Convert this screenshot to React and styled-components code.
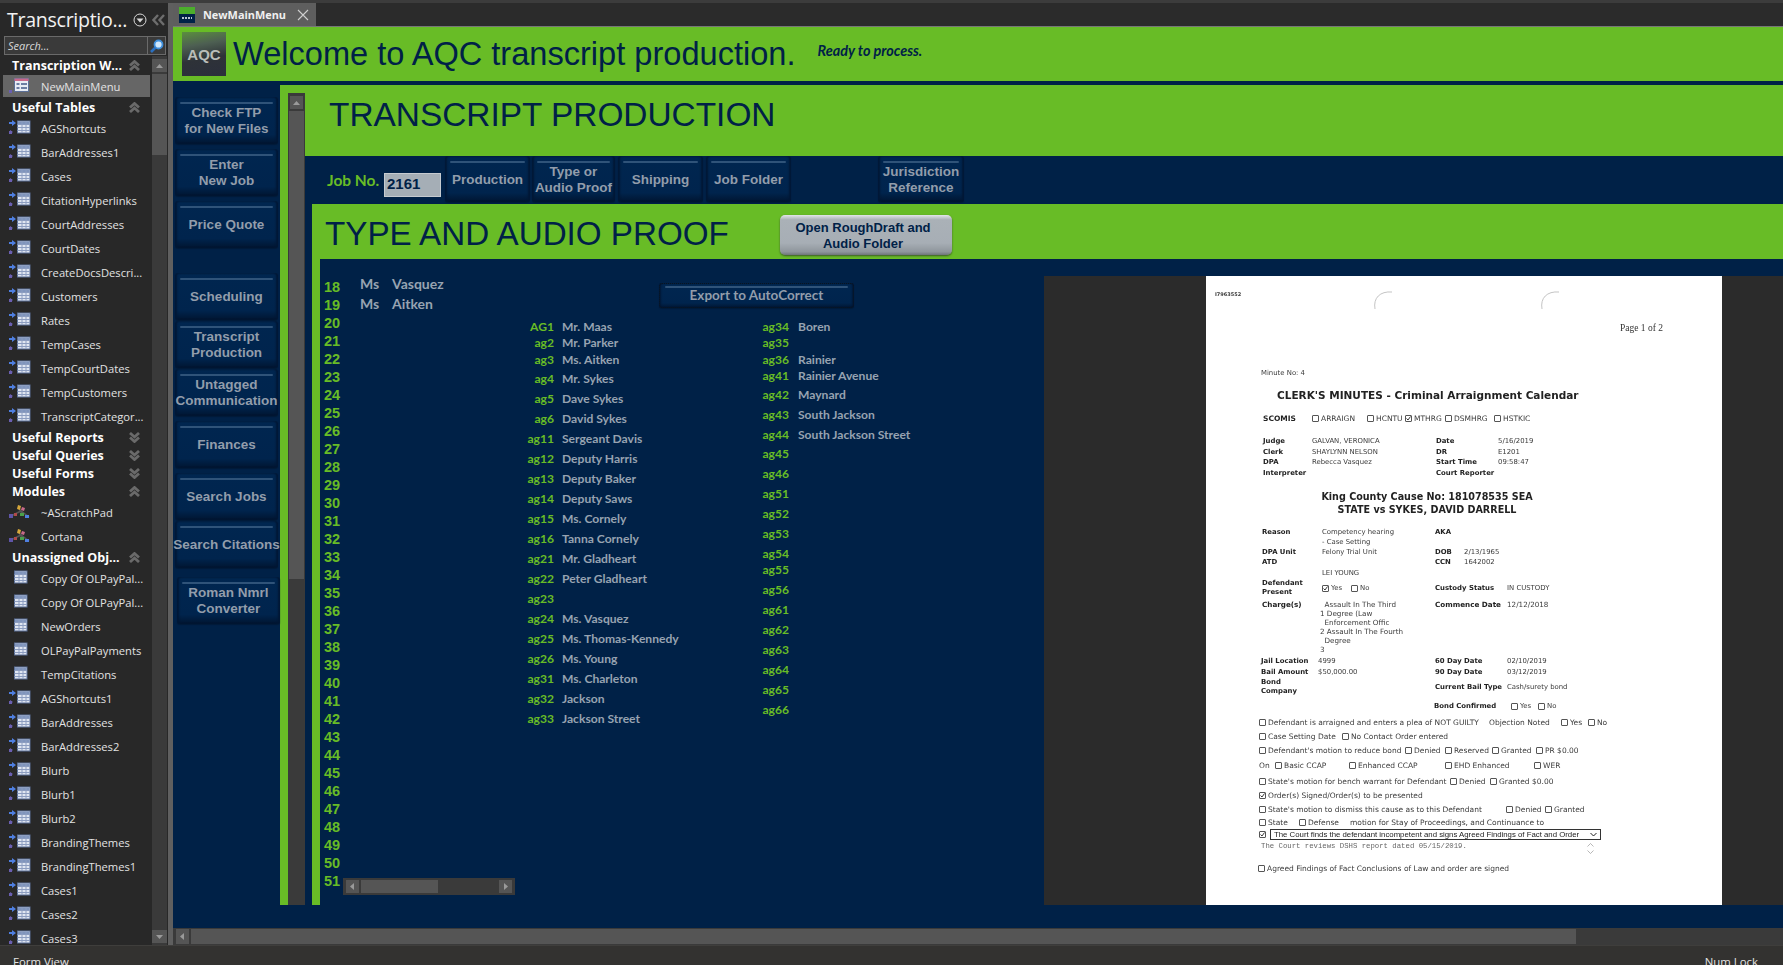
import React from 'react';
import styled, { createGlobalStyle } from 'styled-components';

const green = '#68bc26';
const navy = '#002147';

const GlobalStyle = createGlobalStyle`
  html, body {
    margin: 0;
    padding: 0;
    overflow: hidden;
    background: #333230;
  }
`;

// --- shell ---
const Shell = styled.div`
  width: 1783px;
  height: 965px;
  display: flex;
  flex-direction: column;
  overflow: hidden;
  font-family: 'Open Sans', 'Liberation Sans', sans-serif;
`;

const TopStrip = styled.div`
  height: 3px;
  background: #3c3c3c;
  flex: none;
`;

const Middle = styled.div`
  flex: 1;
  display: flex;
  min-height: 0;
`;

const StatusBar = styled.div`
  height: 20px;
  flex: none;
  box-sizing: border-box;
  display: flex;
  justify-content: space-between;
  padding: 7px 25px 0 13px;
  background: #333230;
  border-top: 1px solid #3f3e3c;
  color: #e4e4e4;
  font-size: 11.4px;
  line-height: 17px;
`;

// --- navigation pane ---
const Nav = styled.div`
  width: 168px;
  flex: none;
  display: flex;
  flex-direction: column;
  background: #282828;
`;

const NavTitleRow = styled.div`
  height: 33px;
  display: flex;
  align-items: center;
  padding-left: 7px;
  color: #f2f2f2;
  font-size: 19.6px;
  line-height: 33px;
  font-weight: 400;
`;

const NavTitleText = styled.span`
  width: 126px;
  white-space: nowrap;
  letter-spacing: -0.3px;
`;

const SearchBox = styled.div`
  height: 19px;
  margin: 0 2px 0 4px;
  display: flex;
  border: 1px solid #6a6a6a;
  background: #3a3a3a;
  box-sizing: border-box;
`;

const SearchText = styled.div`
  flex: 1;
  color: #d8d8d8;
  font-size: 11px;
  font-style: italic;
  line-height: 17px;
  padding-left: 3px;
  border-right: 1px solid #6a6a6a;
`;

const SearchIconBox = styled.div`
  width: 17px;
  display: flex;
  align-items: center;
  justify-content: center;
`;

const NavBody = styled.div`
  flex: 1;
  display: flex;
  min-height: 0;
  margin-top: 1px;
`;

const NavList = styled.div`
  width: 152px;
  flex: none;
  overflow: hidden;
`;

const NavHeader = styled.div`
  height: 18px;
  display: flex;
  align-items: center;
  justify-content: space-between;
  padding: 0 12px 0 12px;
  color: #fff;
  font-size: 12.5px;
  font-weight: 700;
  white-space: nowrap;
`;

const NavItem = styled.div`
  height: ${(p) => (p.$selected ? '22px' : '24px')};
  margin: ${(p) => (p.$selected ? '1px 2px 1px 3px' : '0')};
  padding-left: ${(p) => (p.$selected ? '6px' : '9px')};
  display: flex;
  align-items: center;
  background: ${(p) => (p.$selected ? '#666' : 'transparent')};
  color: #e2e2e2;
  font-size: 11.2px;
  white-space: nowrap;
`;

const NavIconSlot = styled.div`
  width: 32px;
  height: 16px;
  flex: none;
`;

const ScrollTrack = styled.div`
  width: 15px;
  flex: none;
  display: flex;
  flex-direction: column;
  background: #3a3a3a;
  gap: 2px;
  padding: 3px 0 2px;
  box-sizing: border-box;
`;

const HorizontalTrack = styled.div`
  height: 17px;
  flex: none;
  display: flex;
  gap: 2px;
  padding: 1px 0 1px 3px;
  box-sizing: border-box;
  background: #3a3a3a;
`;

const ScrollButton = styled.div`
  height: ${(p) => p.$size || 13}px;
  width: ${(p) => (p.$wide ? `${p.$wide}px` : 'auto')};
  flex: none;
  display: flex;
  align-items: center;
  justify-content: center;
  background: #555;
`;

const ScrollThumb = styled.div`
  background: #555;
  flex: none;
  height: ${(p) => p.$size}px;
  width: ${(p) => (p.$wide ? `${p.$wide}px` : 'auto')};
`;

const ScrollSpace = styled.div`
  flex: 1;
`;

const Divider = styled.div`
  width: 5px;
  flex: none;
  background: #5f5f5f;
`;

// --- main area ---
const Main = styled.div`
  flex: 1;
  min-width: 0;
  display: flex;
  flex-direction: column;
  background: ${navy};
`;

const TabStrip = styled.div`
  height: 23px;
  flex: none;
  display: flex;
  background: #2b2b2b;
`;

const Tab = styled.div`
  width: 143px;
  display: flex;
  align-items: center;
  padding-left: 6px;
  box-sizing: border-box;
  background: #5e5e5e;
  color: #f0f0f0;
  font-size: 10.9px;
  font-weight: 700;
`;

const TabLabel = styled.span`
  margin-left: 8px;
  flex: 1;
`;

const WelcomeBand = styled.div`
  height: 55px;
  flex: none;
  display: flex;
  align-items: center;
  padding-left: 9px;
  background: ${green};
  border-top: 1px solid #777;
  box-sizing: border-box;
`;

const Logo = styled.div`
  width: 44px;
  height: 44px;
  display: flex;
  align-items: center;
  justify-content: center;
  background: linear-gradient(170deg, #5b8f3e 0%, #4d5f52 30%, #2e3238 60%, #2b2f3c 100%);
  color: #b9bdb9;
  font-family: 'Liberation Sans', Arial, sans-serif;
  font-size: 15px;
  font-weight: 700;
`;

const WelcomeText = styled.div`
  margin-left: 7px;
  color: ${navy};
  font-family: 'Liberation Sans', Arial, sans-serif;
  font-size: 32.6px;
  white-space: nowrap;
`;

const ReadyText = styled.div`
  margin: 0 0 8px 22px;
  color: ${navy};
  font-family: Lato, 'Liberation Sans', sans-serif;
  font-size: 14.4px;
  font-weight: 700;
  font-style: italic;
  white-space: nowrap;
`;

const Body = styled.div`
  flex: 1;
  min-height: 0;
  display: flex;
`;

const ButtonColumn = styled.div`
  width: 107px;
  flex: none;
  display: flex;
  flex-direction: column;
  padding: 16px 0 0 2px;
  box-sizing: border-box;
`;

const NavyButton = styled.div`
  position: relative;
  width: ${(p) => p.$w || 103}px;
  height: ${(p) => p.$h || 47}px;
  margin-top: ${(p) => p.$top || 0}px;
  margin-left: ${(p) => p.$left || 0}px;
  flex: none;
  display: flex;
  align-items: center;
  justify-content: center;
  text-align: center;
  box-sizing: border-box;
  padding-top: 1px;
  border-radius: 3px;
  background: linear-gradient(#002650 0%, #00244d 80%, #001836 96%, #00142d 100%);
  box-shadow: inset 2px 0 2px #001836, inset -2px 0 2px #001836, 0 1px 1px #001a38;
  color: #929dab;
  font-family: 'Liberation Sans', Arial, sans-serif;
  font-size: 13.5px;
  line-height: 16px;
  font-weight: 700;
  white-space: nowrap;

  &::before {
    content: '';
    position: absolute;
    top: 5px;
    left: 5px;
    right: 5px;
    height: 2px;
    border-radius: 1px;
    background: #2f5379;
  }
`;

const FormFrame = styled.div`
  flex: 1;
  min-width: 0;
  display: flex;
  margin: 4px 0 23px;
  background: ${green};
`;

const FormScroll = styled.div`
  width: 17px;
  flex: none;
  margin: 8px 0 0 8px;
  display: flex;
  flex-direction: column;
  align-items: center;
  padding-top: 3px;
  gap: 2px;
  background: #3a3a3a;
`;

const FormBody = styled.div`
  flex: 1;
  min-width: 0;
  display: flex;
  flex-direction: column;
`;

const TitleBand = styled.div`
  height: 71px;
  flex: none;
  box-sizing: border-box;
  padding: 11px 0 0 24px;
  color: ${navy};
  font-family: 'Liberation Sans', Arial, sans-serif;
  font-size: 33.4px;
  line-height: 38px;
`;

const JobBar = styled.div`
  height: 48px;
  flex: none;
  box-sizing: border-box;
  display: flex;
  align-items: center;
  padding: 0 0 2px 22px;
  background: ${navy};
`;

const JobLabel = styled.div`
  width: 57px;
  margin-top: 2px;
  color: ${green};
  font-family: Lato, 'Liberation Sans', sans-serif;
  font-size: 15.5px;
  font-weight: 700;
  white-space: nowrap;
`;

const JobInput = styled.div`
  width: 57px;
  height: 24px;
  margin: 12px 4px 0 0;
  box-sizing: border-box;
  padding-left: 2px;
  background: #a5aeb6;
  border: 1px solid #c6cbd0;
  color: ${navy};
  font-family: 'Liberation Sans', Arial, sans-serif;
  font-size: 15px;
  font-weight: 700;
  line-height: 20px;
`;

const SubFrame = styled.div`
  flex: 1;
  min-height: 0;
  display: flex;
  flex-direction: column;
  padding-left: 7px;
  background: ${navy};
`;

const SubHead = styled.div`
  height: 55px;
  flex: none;
  box-sizing: border-box;
  display: flex;
  align-items: center;
  padding-left: 13px;
  background: ${green};
`;

const SubTitle = styled.div`
  width: 455px;
  margin-top: 4px;
  color: ${navy};
  font-family: 'Liberation Sans', Arial, sans-serif;
  font-size: 33.2px;
  white-space: nowrap;
`;

const SilverButton = styled.div`
  width: 172px;
  height: 40px;
  margin-top: 7px;
  box-sizing: border-box;
  padding: 5px 6px 0 0;
  border-radius: 5px;
  text-align: center;
  background: linear-gradient(#e3e6e8 0%, #aab1b7 12%, #a7aeb5 70%, #8f969c 92%, #6e7479 100%);
  box-shadow: 0 1px 2px #3d5a28;
  color: ${navy};
  font-family: 'Liberation Sans', Arial, sans-serif;
  font-size: 13px;
  line-height: 16px;
  font-weight: 700;
`;

const ContentRow = styled.div`
  position: relative;
  flex: 1;
  min-height: 0;
  display: flex;
  background: ${navy};
  border-left: 8px solid ${green};
`;

const NumberColumn = styled.div`
  width: 36px;
  flex: none;
  padding: 19px 0 0 4px;
  color: ${green};
  font-family: 'Liberation Sans', Arial, sans-serif;
  font-size: 14.5px;
  font-weight: 700;
  line-height: 18px;
`;

const PeopleColumn = styled.div`
  width: 160px;
  flex: none;
  padding-top: 14px;
`;

const PersonRow = styled.div`
  height: 20px;
  display: flex;
  align-items: center;
  color: #97a3b1;
  font-family: Lato, 'Liberation Sans', sans-serif;
  font-size: 14px;
  font-weight: 700;
`;

const PersonTitle = styled.span`
  width: 32px;
`;

const MiddleColumn = styled.div`
  width: 524px;
  flex: none;
  padding-top: 24px;
`;

const ExportButton = styled(NavyButton)`
  outline: 1px dotted #0a1420;
  outline-offset: -1px;
  font-size: 13.5px;
  font-family: Lato, 'Liberation Sans', sans-serif;
  padding-top: 0;
  padding-bottom: 2px;
  &::before {
    top: 3px;
    left: 6px;
    right: 6px;
  }
`;

const AliasColumns = styled.div`
  display: flex;
  margin-top: 10px;
`;

const AliasColumn = styled.div`
  width: 235px;
  flex: none;
`;

const AliasRow = styled.div`
  height: ${(p) => p.$h}px;
  display: flex;
  align-items: flex-start;
  font-family: Lato, 'Liberation Sans', sans-serif;
  font-size: 12.1px;
  font-weight: 700;
  line-height: 18px;
  white-space: nowrap;
`;

const AliasCode = styled.span`
  width: 34px;
  flex: none;
  text-align: right;
  color: ${green};
`;

const AliasName = styled.span`
  margin-left: ${(p) => p.$gap}px;
  color: #97a3b1;
`;

const MiniScroll = styled.div`
  position: absolute;
  left: 23px;
  top: 619px;
  width: 172px;
  height: 17px;
  box-sizing: border-box;
  padding: 2px 3px;
  display: flex;
  gap: 2px;
  background: #3a3a3a;
`;

const MiniThumb = styled.div`
  width: 77px;
  background: #555;
`;

// --- scanned page viewer ---
const Viewer = styled.div`
  flex: 1;
  margin-top: 17px;
  padding-left: 162px;
  background: #2b2b2b;
`;

const Paper = styled.div`
  width: 516px;
  height: 100%;
  box-sizing: border-box;
  padding-left: 55px;
  background: #fff;
  color: #3a3a3a;
  font-family: 'DejaVu Sans', Verdana, sans-serif;
  font-size: 6.9px;
  overflow: hidden;
  filter: blur(0.25px);
`;

const Row = styled.div`
  height: ${(p) => p.$h || 10}px;
  margin-top: ${(p) => p.$mt || 0}px;
  margin-left: ${(p) => p.$ml || 0}px;
  display: flex;
  align-items: center;
  white-space: nowrap;
  font-size: ${(p) => (p.$big ? '7.5px' : 'inherit')};
`;

const Slot = styled.div`
  width: ${(p) => p.$w}px;
  flex: none;
  font-weight: ${(p) => (p.$bold ? 700 : 400)};
  color: ${(p) => (p.$bold ? '#222' : 'inherit')};
  display: flex;
  align-items: center;
`;

const PageNo = styled.div`
  height: 16px;
  width: 402px;
  text-align: right;
  color: #333;
  font-family: 'Liberation Serif', 'Times New Roman', serif;
  font-size: 9.5px;
  line-height: 16px;
`;

const ScanId = styled.div`
  width: 159px;
  margin-left: -46px;
  font-size: 5px;
  font-weight: 700;
`;

const TopMarks = styled.div`
  height: 44px;
  display: flex;
  align-items: flex-start;
  padding-top: 14px;
  box-sizing: border-box;
  line-height: 8px;
`;

const HoleSlot = styled.div`
  width: ${(p) => p.$w}px;
  flex: none;
`;

const PaperHeading = styled.div`
  color: #222;
  font-weight: 700;
  font-size: ${(p) => p.$size}px;
`;

const CenteredLine = styled.div`
  height: ${(p) => p.$h}px;
  margin-top: ${(p) => p.$mt || 0}px;
  width: 332px;
  text-align: center;
  color: #222;
  font-size: 9.6px;
  font-weight: 700;
  line-height: ${(p) => p.$h}px;
  white-space: nowrap;
`;

const CheckBox = styled.span`
  width: 7px;
  height: 7px;
  margin-right: 2px;
  flex: none;
  box-sizing: border-box;
  border: 1px solid #555;
  border-radius: 1px;
  display: inline-flex;
  align-items: center;
  justify-content: center;
`;

const TwoLine = styled.div`
  font-weight: 700;
  color: #222;
  line-height: 9.5px;
`;

const ChargeText = styled.div`
  line-height: 9px;
  font-size: 7.2px;
`;

const SelectBox = styled.div`
  width: 331px;
  height: 11px;
  margin-left: 2px;
  box-sizing: border-box;
  padding: 0 3px;
  display: flex;
  align-items: center;
  justify-content: space-between;
  border: 1px solid #333;
  color: #222;
  font-family: 'Liberation Sans', Arial, sans-serif;
  font-size: 7.8px;
`;

const NotesBlock = styled.div`
  height: 20px;
  margin-top: 1px;
  width: 336px;
  display: flex;
  justify-content: space-between;
  font-family: 'Liberation Mono', 'Courier New', monospace;
  font-size: 7.3px;
  color: #666;
  line-height: 10px;
`;

const ArrowStack = styled.div`
  display: flex;
  flex-direction: column;
  gap: 3px;
  padding: 2px 3px 0 0;
`;

// --- icons ---
const Chevrons = ({ up, color = '#6a6a6a', size = 11 }) => (
  <svg width={size} height={size} viewBox="0 0 11 11">
    <path
      d={up ? 'M1 5.5 5.5 1.5 10 5.5M1 10 5.5 6 10 10' : 'M1 1 5.5 5 10 1M1 5.5 5.5 9.5 10 5.5'}
      fill="none"
      stroke={color}
      strokeWidth="2.8"
    />
  </svg>
);

const Triangle = ({ dir, size = 9, color = '#9a9a9a' }) => {
  const shapes = {
    up: '1,7 8,7 4.5,3',
    down: '1,3 8,3 4.5,7',
    left: '6,1 6,8 2,4.5',
    right: '3,1 3,8 7,4.5',
  };
  return (
    <svg width={size} height={size} viewBox="0 0 9 9">
      <polygon points={shapes[dir]} fill={color} />
    </svg>
  );
};

const GridIcon = ({ x }) => (
  <g transform={`translate(${x} 1)`}>
    <rect x="0" y="0" width="12.5" height="12" fill="#dfe5f1" stroke="#5b6f96" />
    <rect x="0.5" y="0.5" width="11.5" height="2.5" fill="#7f94bc" />
    {[3, 6, 9].map((v) => (
      <line key={`h${v}`} x1="0" x2="12.5" y1={v + 0.5} y2={v + 0.5} stroke="#8c9dc0" />
    ))}
    {[4, 8].map((v) => (
      <line key={`v${v}`} x1={v + 0.5} x2={v + 0.5} y1="0" y2="12" stroke="#8c9dc0" />
    ))}
  </g>
);

const LinkMarks = () => (
  <>
    <path d="M0 2h3V0l4 3-4 3V4H0z" fill="#4f7fe0" />
    <path d="M0 11l3-0 0 3-3 0z M1 10l3 2-3 2z" fill="#6a5fb0" />
  </>
);

const NavIcon = ({ kind }) => {
  if (kind === 'form') {
    return (
      <svg width="24" height="16" viewBox="0 0 24 16">
        <rect x="5.5" y="0.5" width="14" height="13" fill="#e8ecf4" stroke="#5b6f96" />
        <rect x="5.5" y="0.5" width="14" height="2.5" fill="#c9688a" />
        <rect x="7.5" y="5" width="3" height="2" fill="#6d7ea3" />
        <rect x="12" y="5" width="6" height="2" fill="#6d7ea3" />
        <rect x="7.5" y="9" width="3" height="2" fill="#6d7ea3" />
        <rect x="12" y="9" width="6" height="2" fill="#6d7ea3" />
        <rect x="0" y="12" width="3" height="3" fill="#6a5fb0" />
      </svg>
    );
  }
  if (kind === 'module') {
    return (
      <svg width="24" height="16" viewBox="0 0 24 16">
        <path d="M2 12 12 7 20 13M9 3 14 11" stroke="#555" strokeWidth="1.5" fill="none" />
        <path d="M0 10h4v4H0z" fill="#5f55a8" />
        <path d="M5 9h3v3H5z" fill="#b04a4a" />
        <path d="M9 1l3 1-1 4-3-1z" fill="#d8a83a" />
        <path d="M13 3l3 1-1 3-3-1z" fill="#c96a8a" />
        <path d="M11 9h4v3h-4z" fill="#4aa04a" />
        <path d="M16 11h4v3h-4z" fill="#4f7fe0" />
      </svg>
    );
  }
  return (
    <svg width="24" height="16" viewBox="0 0 24 16">
      {kind === 'link' && <LinkMarks />}
      <GridIcon x={kind === 'link' ? 8.5 : 5.5} />
    </svg>
  );
};

const DocumentTab = () => (
  <svg width="16" height="16" viewBox="0 0 16 16">
    <rect width="16" height="16" fill={navy} />
    <rect width="16" height="7" fill="#4cae2c" />
    <path d="M3 11h10" stroke="#b8c4d0" strokeWidth="2" strokeDasharray="2 1" />
  </svg>
);

const SearchGlass = () => (
  <svg width="14" height="14" viewBox="0 0 14 14">
    <circle cx="8.5" cy="5.5" r="4" fill="#cfe6fb" stroke="#3f8fdc" strokeWidth="1.8" />
    <path d="M5.5 8.5 1 13" stroke="#2a6fc0" strokeWidth="2.6" />
  </svg>
);

const DropCircle = () => (
  <svg width="14" height="14" viewBox="0 0 14 14">
    <circle cx="7" cy="7" r="6" fill="none" stroke="#d8d8d8" strokeWidth="1" />
    <polygon points="3.5,5.5 10.5,5.5 7,9.5" fill="#d8d8d8" />
  </svg>
);

const CollapseChevrons = () => (
  <svg width="14" height="12" viewBox="0 0 14 12" style={{ marginLeft: 5 }}>
    <path d="M6 1 1.5 6 6 11M12 1 7.5 6 12 11" fill="none" stroke="#6d6d6d" strokeWidth="2.4" />
  </svg>
);

const HoleArc = () => (
  <svg width="20" height="20" viewBox="0 0 20 20">
    <path d="M1 19C-1 8 6 1 18 2" fill="none" stroke="#aaa" strokeWidth="0.7" />
  </svg>
);

const Check = ({ checked, children }) => (
  <>
    <CheckBox>
      {checked && (
        <svg width="5" height="5" viewBox="0 0 5 5">
          <path d="M0.5 2.5 2 4 4.5 0.5" fill="none" stroke="#222" strokeWidth="0.9" />
        </svg>
      )}
    </CheckBox>
    {children}
  </>
);

// --- data ---
const navEntries = [
  { head: 'Transcription W...', up: true },
  { label: 'NewMainMenu', kind: 'form', selected: true },
  { head: 'Useful Tables', up: true },
  ...['AGShortcuts', 'BarAddresses1', 'Cases', 'CitationHyperlinks', 'CourtAddresses', 'CourtDates', 'CreateDocsDescri...', 'Customers', 'Rates', 'TempCases', 'TempCourtDates', 'TempCustomers', 'TranscriptCategor...'].map((label) => ({ label, kind: 'link' })),
  { head: 'Useful Reports' },
  { head: 'Useful Queries' },
  { head: 'Useful Forms' },
  { head: 'Modules', up: true },
  { label: '~AScratchPad', kind: 'module' },
  { label: 'Cortana', kind: 'module' },
  { head: 'Unassigned Obj...', up: true },
  ...['Copy Of OLPayPal...', 'Copy Of OLPayPal...', 'NewOrders', 'OLPayPalPayments', 'TempCitations'].map((label) => ({ label, kind: 'table' })),
  ...['AGShortcuts1', 'BarAddresses', 'BarAddresses2', 'Blurb', 'Blurb1', 'Blurb2', 'BrandingThemes', 'BrandingThemes1', 'Cases1', 'Cases2', 'Cases3'].map((label) => ({ label, kind: 'link' })),
];

const sideButtons = [
  { lines: ['Check FTP', 'for New Files'], top: 0 },
  { lines: ['Enter', 'New Job'], top: 5 },
  { lines: ['Price Quote'], top: 5 },
  { lines: ['Scheduling'], top: 25 },
  { lines: ['Transcript', 'Production'], top: 1 },
  { lines: ['Untagged', 'Communication'], top: 1 },
  { lines: ['Finances'], top: 5 },
  { lines: ['Search Jobs'], top: 5 },
  { lines: ['Search Citations'], top: 1 },
  { lines: ['Roman Nmrl', 'Converter'], top: 9, left: 2, w: 103 },
];

const jobButtons = [
  { lines: ['Production'], w: 85, top: 0 },
  { lines: ['Type or', 'Audio Proof'], w: 83, left: 2 },
  { lines: ['Shipping'], w: 85, left: 3 },
  { lines: ['Job Folder'], w: 85, left: 3 },
  { lines: ['Jurisdiction', 'Reference'], w: 86, left: 87 },
];

const aliasOne = [
  ['AG1', 'Mr. Maas', 16], ['ag2', 'Mr. Parker', 17], ['ag3', 'Ms. Aitken', 19], ['ag4', 'Mr. Sykes', 20],
  ['ag5', 'Dave Sykes', 20], ['ag6', 'David Sykes', 20], ['ag11', 'Sergeant Davis', 20], ['ag12', 'Deputy Harris', 20],
  ['ag13', 'Deputy Baker', 20], ['ag14', 'Deputy Saws', 20], ['ag15', 'Ms. Cornely', 20], ['ag16', 'Tanna Cornely', 20],
  ['ag21', 'Mr. Gladheart', 20], ['ag22', 'Peter Gladheart', 20], ['ag23', '', 20], ['ag24', 'Ms. Vasquez', 20],
  ['ag25', 'Ms. Thomas-Kennedy', 20], ['ag26', 'Ms. Young', 20], ['ag31', 'Ms. Charleton', 20], ['ag32', 'Jackson', 20],
  ['ag33', 'Jackson Street', 20],
];

const aliasTwo = [
  ['ag34', 'Boren', 16], ['ag35', '', 17], ['ag36', 'Rainier', 16], ['ag41', 'Rainier Avenue', 19],
  ['ag42', 'Maynard', 20], ['ag43', 'South Jackson', 20], ['ag44', 'South Jackson Street', 19], ['ag45', '', 20],
  ['ag46', '', 20], ['ag51', '', 20], ['ag52', '', 20], ['ag53', '', 20], ['ag54', '', 16], ['ag55', '', 20],
  ['ag56', '', 20], ['ag61', '', 20], ['ag62', '', 20], ['ag63', '', 20], ['ag64', '', 20], ['ag65', '', 20], ['ag66', '', 20],
];

const lineNumbers = Array.from({ length: 34 }, (_, i) => i + 18);

const multiline = (lines) =>
  lines.map((line, i) => (
    <React.Fragment key={line}>
      {i > 0 && <br />}
      {line}
    </React.Fragment>
  ));

function ScannedPage() {
  return (
    <Paper>
      <TopMarks>
        <ScanId>I7963552</ScanId>
        <HoleSlot $w={167}>
          <HoleArc />
        </HoleSlot>
        <HoleSlot $w={20}>
          <HoleArc />
        </HoleSlot>
      </TopMarks>
      <PageNo>Page 1 of 2</PageNo>
      <Row $mt={30} $h={14}>Minute No: 4</Row>
      <Row $mt={8} $h={14} $ml={16}>
        <PaperHeading $size={10.5}>CLERK'S MINUTES - Criminal Arraignment Calendar</PaperHeading>
      </Row>
      <Row $mt={9} $h={14} $ml={2} $big>
        <Slot $w={49} $bold>SCOMIS</Slot>
        <Slot $w={55}><Check>ARRAIGN</Check></Slot>
        <Slot $w={38}><Check>HCNTU</Check></Slot>
        <Slot $w={40}><Check checked>MTHRG</Check></Slot>
        <Slot $w={49}><Check>DSMHRG</Check></Slot>
        <Slot $w={47}><Check>HSTKIC</Check></Slot>
      </Row>
      <Row $mt={11} $h={10} $ml={2}>
        <Slot $w={49} $bold>Judge</Slot><Slot $w={124}>GALVAN, VERONICA</Slot>
        <Slot $w={62} $bold>Date</Slot><Slot $w={60}>5/16/2019</Slot>
      </Row>
      <Row $h={11} $ml={2}>
        <Slot $w={49} $bold>Clerk</Slot><Slot $w={124}>SHAYLYNN NELSON</Slot>
        <Slot $w={62} $bold>DR</Slot><Slot $w={60}>E1201</Slot>
      </Row>
      <Row $h={10} $ml={2}>
        <Slot $w={49} $bold>DPA</Slot><Slot $w={124}>Rebecca Vasquez</Slot>
        <Slot $w={62} $bold>Start Time</Slot><Slot $w={60}>09:58:47</Slot>
      </Row>
      <Row $h={11} $ml={2}>
        <Slot $w={173} $bold>Interpreter</Slot><Slot $w={80} $bold>Court Reporter</Slot>
      </Row>
      <CenteredLine $mt={13} $h={12}>King County Cause No: 181078535 SEA</CenteredLine>
      <CenteredLine $h={13}>STATE vs SYKES, DAVID DARRELL</CenteredLine>
      <Row $mt={11} $h={10} $ml={1}>
        <Slot $w={60} $bold>Reason</Slot><Slot $w={113}>Competency hearing</Slot><Slot $w={40} $bold>AKA</Slot>
      </Row>
      <Row $h={9} $ml={61}>- Case Setting</Row>
      <Row $h={11} $ml={1}>
        <Slot $w={60} $bold>DPA Unit</Slot><Slot $w={113}>Felony Trial Unit</Slot>
        <Slot $w={29} $bold>DOB</Slot><Slot $w={60}>2/13/1965</Slot>
      </Row>
      <Row $h={10} $ml={1}>
        <Slot $w={173} $bold>ATD</Slot><Slot $w={29} $bold>CCN</Slot><Slot $w={60}>1642002</Slot>
      </Row>
      <Row $h={11} $ml={61}>LEI YOUNG</Row>
      <Row $h={20} $ml={1}>
        <Slot $w={60}><TwoLine>Defendant<br />Present</TwoLine></Slot>
        <Slot $w={29}><Check checked>Yes</Check></Slot>
        <Slot $w={84}><Check>No</Check></Slot>
        <Slot $w={72} $bold>Custody Status</Slot><Slot $w={60}>IN CUSTODY</Slot>
      </Row>
      <Row $h={58} $ml={1}>
        <Slot $w={58} $bold>
          <ChargeText>Charge(s)<br /><br /><br /><br /><br /><br /></ChargeText>
        </Slot>
        <Slot $w={115}>
          <ChargeText>
            &nbsp;&nbsp;Assault In The Third<br />
            1 Degree (Law<br />
            &nbsp;&nbsp;Enforcement Offic<br />
            2 Assault In The Fourth<br />
            &nbsp;&nbsp;Degree<br />
            3
          </ChargeText>
        </Slot>
        <Slot $w={72} $bold>
          <ChargeText>Commence Date<br /><br /><br /><br /><br /><br /></ChargeText>
        </Slot>
        <Slot $w={60}>
          <ChargeText>12/12/2018<br /><br /><br /><br /><br /><br /></ChargeText>
        </Slot>
      </Row>
      <Row $h={10}>
        <Slot $w={57} $bold>Jail Location</Slot><Slot $w={117}>4999</Slot>
        <Slot $w={72} $bold>60 Day Date</Slot><Slot $w={60}>02/10/2019</Slot>
      </Row>
      <Row $h={11}>
        <Slot $w={57} $bold>Bail Amount</Slot><Slot $w={117}>$50,000.00</Slot>
        <Slot $w={72} $bold>90 Day Date</Slot><Slot $w={60}>03/12/2019</Slot>
      </Row>
      <Row $h={20}>
        <Slot $w={174}><TwoLine>Bond<br />Company</TwoLine></Slot>
        <Slot $w={72} $bold>Current Bail Type</Slot><Slot $w={70}>Cash/surety bond</Slot>
      </Row>
      <Row $mt={4} $ml={173}>
        <Slot $w={77} $bold>Bond Confirmed</Slot>
        <Slot $w={27}><Check>Yes</Check></Slot>
        <Slot $w={20}><Check>No</Check></Slot>
      </Row>
      <Row $mt={6} $ml={-2} $big>
        <Slot $w={230}><Check>Defendant is arraigned and enters a plea of NOT GUILTY</Check></Slot>
        <Slot $w={72}>Objection Noted</Slot>
        <Slot $w={27}><Check>Yes</Check></Slot>
        <Slot $w={20}><Check>No</Check></Slot>
      </Row>
      <Row $mt={4} $ml={-2} $big>
        <Slot $w={83}><Check>Case Setting Date</Check></Slot>
        <Slot $w={110}><Check>No Contact Order entered</Check></Slot>
      </Row>
      <Row $mt={4} $ml={-2} $big>
        <Slot $w={146}><Check>Defendant's motion to reduce bond</Check></Slot>
        <Slot $w={40}><Check>Denied</Check></Slot>
        <Slot $w={47}><Check>Reserved</Check></Slot>
        <Slot $w={44}><Check>Granted</Check></Slot>
        <Slot $w={50}><Check>PR $0.00</Check></Slot>
      </Row>
      <Row $mt={5} $ml={-2} $big>
        <Slot $w={16}>On</Slot>
        <Slot $w={74}><Check>Basic CCAP</Check></Slot>
        <Slot $w={96}><Check>Enhanced CCAP</Check></Slot>
        <Slot $w={89}><Check>EHD Enhanced</Check></Slot>
        <Slot $w={30}><Check>WER</Check></Slot>
      </Row>
      <Row $mt={6} $ml={-2} $big>
        <Slot $w={191}><Check>State's motion for bench warrant for Defendant</Check></Slot>
        <Slot $w={40}><Check>Denied</Check></Slot>
        <Slot $w={42}><Check>Granted</Check></Slot>
        <Slot $w={30}>$0.00</Slot>
      </Row>
      <Row $mt={4} $ml={-2} $big>
        <Check checked>Order(s) Signed/Order(s) to be presented</Check>
      </Row>
      <Row $mt={4} $ml={-2} $big>
        <Slot $w={247}><Check>State's motion to dismiss this cause as to this Defendant</Check></Slot>
        <Slot $w={39}><Check>Denied</Check></Slot>
        <Slot $w={40}><Check>Granted</Check></Slot>
      </Row>
      <Row $mt={3} $ml={-2} $big>
        <Slot $w={40}><Check>State</Check></Slot>
        <Slot $w={51}><Check>Defense</Check></Slot>
        <Slot $w={210}>motion for Stay of Proceedings, and Continuance to</Slot>
      </Row>
      <Row $mt={2} $h={11} $ml={-2}>
        <Check checked />
        <SelectBox>
          The Court finds the defendant incompetent and signs Agreed Findings of Fact and Order
          <svg width="7" height="5" viewBox="0 0 7 5">
            <path d="M0.5 1 3.5 4 6.5 1" fill="none" stroke="#222" strokeWidth="1" />
          </svg>
        </SelectBox>
      </Row>
      <NotesBlock>
        The Court reviews DSHS report dated 05/15/2019.
        <ArrowStack>
          <svg width="7" height="4" viewBox="0 0 7 4"><path d="M0.5 3.5 3.5 0.5 6.5 3.5" fill="none" stroke="#999" strokeWidth="0.7" /></svg>
          <svg width="7" height="4" viewBox="0 0 7 4"><path d="M0.5 0.5 3.5 3.5 6.5 0.5" fill="none" stroke="#999" strokeWidth="0.7" /></svg>
        </ArrowStack>
      </NotesBlock>
      <Row $mt={2} $ml={-3} $big>
        <Check>Agreed Findings of Fact Conclusions of Law and order are signed</Check>
      </Row>
    </Paper>
  );
}

function App() {
  return (
    <Shell>
      <GlobalStyle />
      <TopStrip />
      <Middle>
        <Nav>
          <NavTitleRow>
            <NavTitleText>Transcriptio...</NavTitleText>
            <DropCircle />
            <CollapseChevrons />
          </NavTitleRow>
          <SearchBox>
            <SearchText>Search...</SearchText>
            <SearchIconBox><SearchGlass /></SearchIconBox>
          </SearchBox>
          <NavBody>
            <NavList>
              {navEntries.map((entry, i) =>
                entry.head ? (
                  <NavHeader key={i}>
                    {entry.head}
                    <Chevrons up={entry.up} />
                  </NavHeader>
                ) : (
                  <NavItem key={i} $selected={entry.selected}>
                    <NavIconSlot><NavIcon kind={entry.kind} /></NavIconSlot>
                    {entry.label}
                  </NavItem>
                ),
              )}
            </NavList>
            <ScrollTrack>
              <ScrollButton><Triangle dir="up" /></ScrollButton>
              <ScrollThumb $size={81} />
              <ScrollSpace />
              <ScrollButton><Triangle dir="down" /></ScrollButton>
            </ScrollTrack>
          </NavBody>
        </Nav>
        <Divider />
        <Main>
          <TabStrip>
            <Tab>
              <DocumentTab />
              <TabLabel>NewMainMenu</TabLabel>
              <svg width="12" height="12" viewBox="0 0 12 12" style={{ marginRight: 7 }}>
                <path d="M1 1 11 11M11 1 1 11" stroke="#cfcfcf" strokeWidth="1.1" />
              </svg>
            </Tab>
          </TabStrip>
          <WelcomeBand>
            <Logo>AQC</Logo>
            <WelcomeText>Welcome to AQC transcript production.</WelcomeText>
            <ReadyText>Ready to process.</ReadyText>
          </WelcomeBand>
          <Body>
            <ButtonColumn>
              {sideButtons.map((b) => (
                <NavyButton key={b.lines[0]} $top={b.top} $left={b.left} $w={b.w}>
                  <div>{multiline(b.lines)}</div>
                </NavyButton>
              ))}
            </ButtonColumn>
            <FormFrame>
              <FormScroll>
                <ScrollButton $wide={13}><Triangle dir="up" /></ScrollButton>
                <ScrollThumb $size={468} $wide={15} />
              </FormScroll>
              <FormBody>
                <TitleBand>TRANSCRIPT PRODUCTION</TitleBand>
                <JobBar>
                  <JobLabel>Job No.</JobLabel>
                  <JobInput>2161</JobInput>
                  {jobButtons.map((b) => (
                    <NavyButton key={b.lines[0]} $w={b.w} $h={46} $left={b.left}>
                      <div>{multiline(b.lines)}</div>
                    </NavyButton>
                  ))}
                </JobBar>
                <SubFrame>
                  <SubHead>
                    <SubTitle>TYPE AND AUDIO PROOF</SubTitle>
                    <SilverButton>Open RoughDraft and<br />Audio Folder</SilverButton>
                  </SubHead>
                  <ContentRow>
                    <NumberColumn>
                      {lineNumbers.map((n) => (
                        <div key={n}>{n}</div>
                      ))}
                    </NumberColumn>
                    <PeopleColumn>
                      <PersonRow><PersonTitle>Ms</PersonTitle>Vasquez</PersonRow>
                      <PersonRow><PersonTitle>Ms</PersonTitle>Aitken</PersonRow>
                    </PeopleColumn>
                    <MiddleColumn>
                      <ExportButton $w={195} $h={25} $left={139}>Export to AutoCorrect</ExportButton>
                      <AliasColumns>
                        <AliasColumn>
                          {aliasOne.map(([code, name, h]) => (
                            <AliasRow key={code} $h={h}>
                              <AliasCode>{code}</AliasCode>
                              <AliasName $gap={8}>{name}</AliasName>
                            </AliasRow>
                          ))}
                        </AliasColumn>
                        <AliasColumn>
                          {aliasTwo.map(([code, name, h]) => (
                            <AliasRow key={code} $h={h}>
                              <AliasCode>{code}</AliasCode>
                              <AliasName $gap={9}>{name}</AliasName>
                            </AliasRow>
                          ))}
                        </AliasColumn>
                      </AliasColumns>
                    </MiddleColumn>
                    <Viewer>
                      <ScannedPage />
                    </Viewer>
                    <MiniScroll>
                      <ScrollButton $wide={13} $size={13}><Triangle dir="left" /></ScrollButton>
                      <MiniThumb />
                      <ScrollSpace />
                      <ScrollButton $wide={13} $size={13}><Triangle dir="right" /></ScrollButton>
                    </MiniScroll>
                  </ContentRow>
                </SubFrame>
              </FormBody>
            </FormFrame>
          </Body>
          <HorizontalTrack>
            <ScrollButton $wide={13} $size={15}><Triangle dir="left" /></ScrollButton>
            <ScrollThumb $size={15} $wide={1385} />
          </HorizontalTrack>
        </Main>
      </Middle>
      <StatusBar>
        <span>Form View</span>
        <span>Num Lock</span>
      </StatusBar>
    </Shell>
  );
}

export default App;
